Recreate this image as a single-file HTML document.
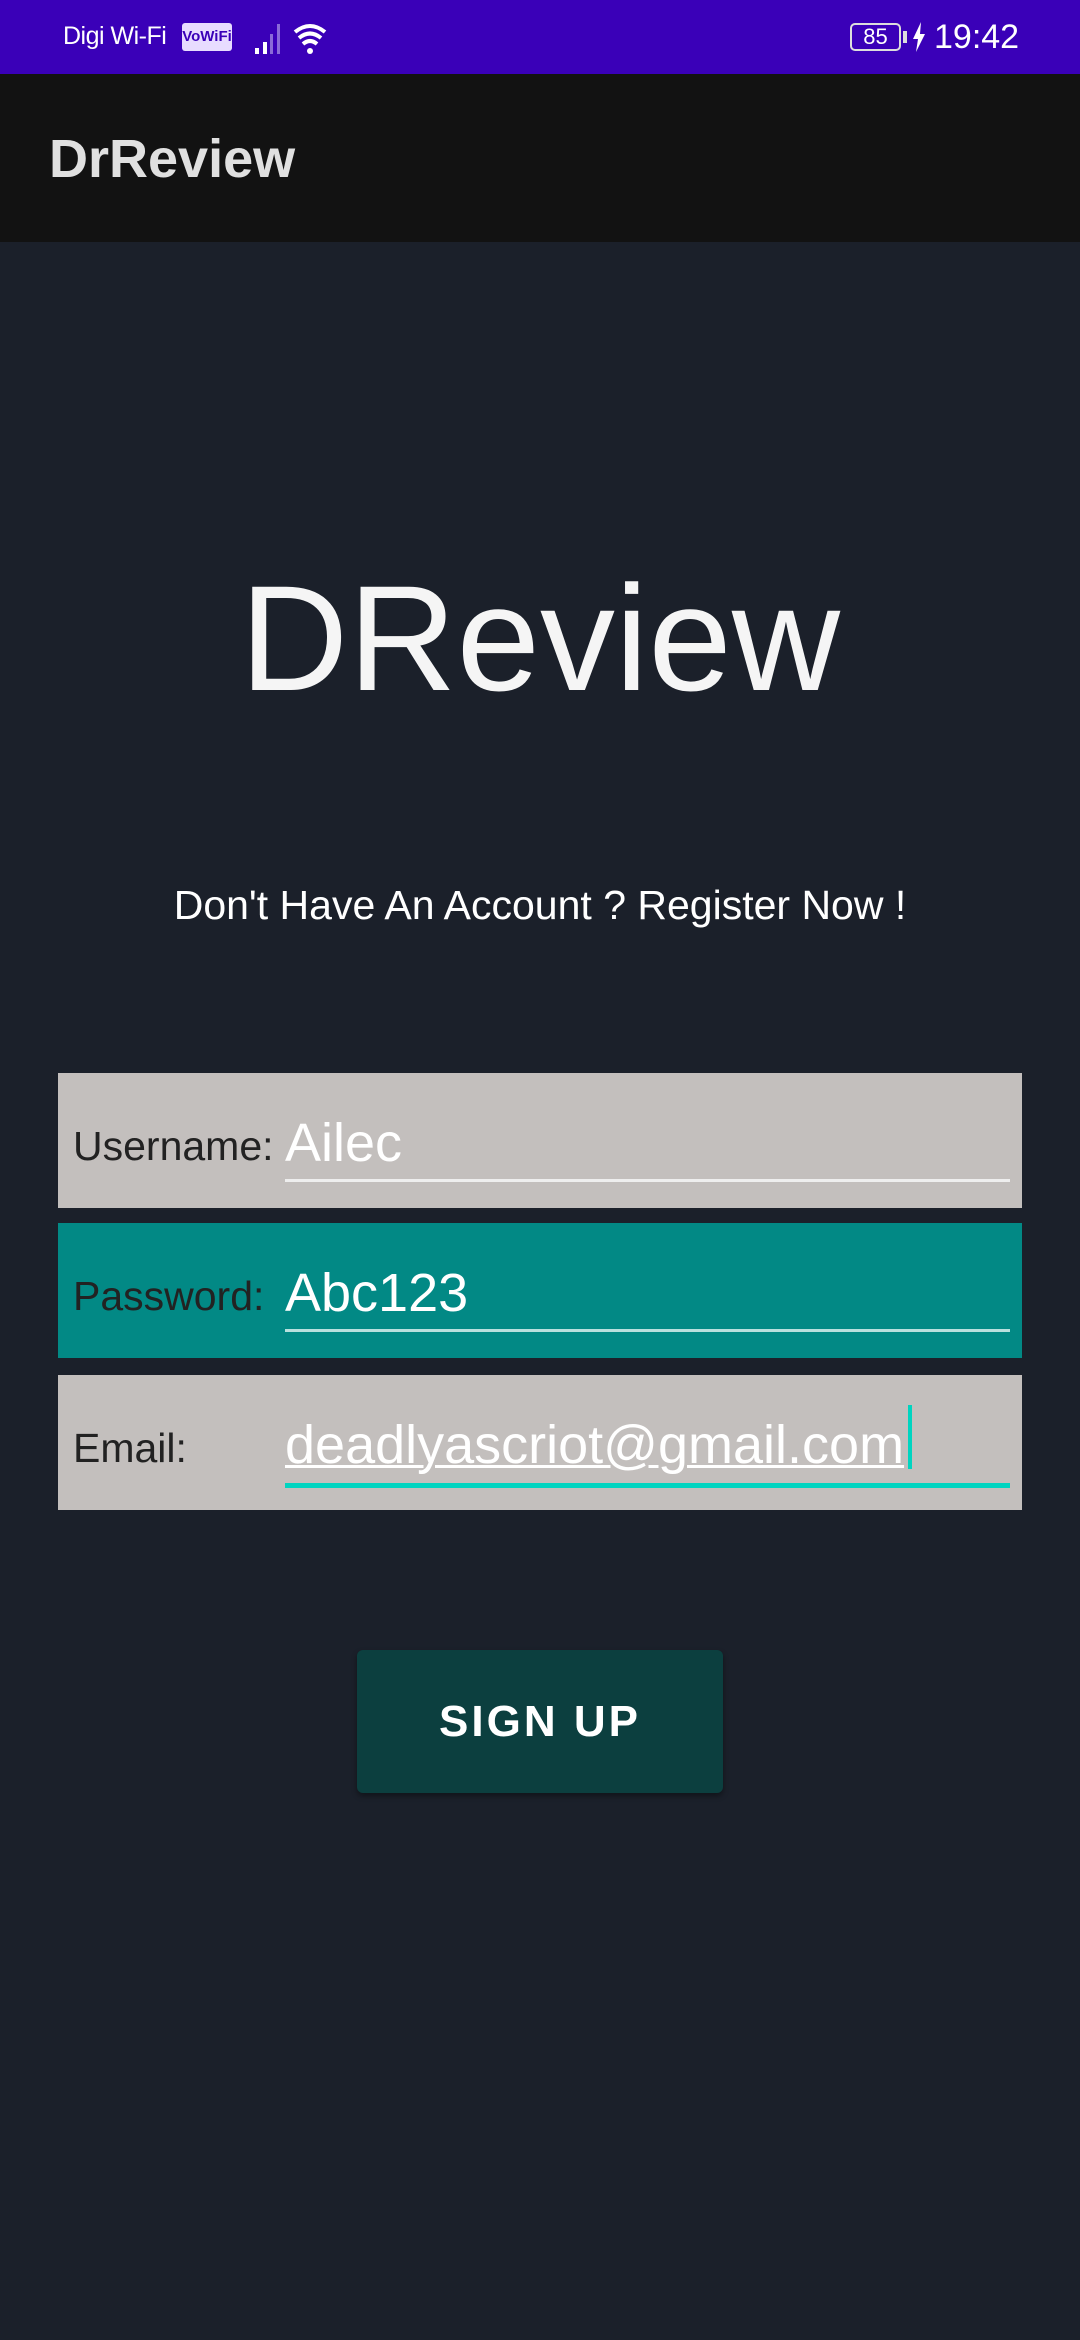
<!DOCTYPE html>
<html><head><meta charset="utf-8"><style>
*{margin:0;padding:0;box-sizing:border-box}
body{width:1080px;height:2340px;background:#1b202a;font-family:"Liberation Sans",sans-serif;position:relative;overflow:hidden}
.abs{position:absolute}
.sb{left:0;top:0;width:1080px;height:74px;background:#3a00b8;color:#fff}
.ab{left:0;top:74px;width:1080px;height:168px;background:#121212}
.box{left:58px;width:964px;height:135px;background:#c3bfbd}
.lab{left:15px;font-size:41px;color:#222}
.val{left:227px;font-size:54px;color:#fff;white-space:nowrap}
.ul{left:227px;width:725px;height:3px;background:#eee}
</style></head><body>
<div class="abs sb">
 <div class="abs" style="left:63px;top:22px;font-size:25px;letter-spacing:-0.5px">Digi Wi-Fi</div>
 <div class="abs" style="left:182px;top:23px;width:50px;height:28px;background:#e8dcff;border-radius:3px;color:#3a00b8;font-size:15px;font-weight:bold;text-align:center;line-height:28px;overflow:hidden">VoWiFi</div>
 <svg class="abs" style="left:255px;top:20px" width="90" height="36" viewBox="0 0 90 36">
  <rect x="0" y="28" width="4" height="6" fill="#fff"/><rect x="8" y="22" width="4" height="12" fill="#fff"/><rect x="15" y="14" width="3" height="20" fill="#8a6ad8"/><rect x="22" y="4" width="3" height="30" fill="#8a6ad8"/>
  <path d="M40 12 Q55 0 70 12 M44 18 Q55 9 66 18 M48 24 Q55 18 62 24" stroke="#fff" stroke-width="4" fill="none"/>
  <circle cx="55" cy="31" r="3" fill="#fff"/>
 </svg>
 <div class="abs" style="left:850px;top:23px;width:51px;height:28px;border:2px solid #ddd;border-radius:5px;font-size:22px;text-align:center;line-height:24px">85</div>
 <div class="abs" style="left:903px;top:31px;width:4px;height:12px;background:#ddd"></div>
 <svg class="abs" style="left:912px;top:22px" width="14" height="30" viewBox="0 0 14 30"><path d="M9 0 L1 17 H6 L4 30 L13 12 H8 Z" fill="#fff"/></svg>
 <div class="abs" style="left:934px;top:18px;font-size:34px">19:42</div>
</div>
<div class="abs ab"><div class="abs" style="left:49px;top:54px;font-size:54px;font-weight:bold;color:#e0e0e0">DrReview</div></div>
<div class="abs" style="left:0;width:1080px;top:552px;text-align:center;font-size:150px;color:#f5f5f5">DReview</div>
<div class="abs" style="left:0;width:1080px;top:882px;text-align:center;font-size:41px;color:#fff">Don't Have An Account ? Register Now !</div>

<div class="abs box" style="top:1073px">
 <div class="abs lab" style="top:50px">Username:</div>
 <div class="abs val" style="top:39px">Ailec</div>
 <div class="abs ul" style="top:106px"></div>
</div>
<div class="abs box" style="top:1223px;background:#028985">
 <div class="abs lab" style="top:50px">Password:</div>
 <div class="abs val" style="top:39px">Abc123</div>
 <div class="abs ul" style="top:106px;background:#b8e0de"></div>
</div>
<div class="abs box" style="top:1375px">
 <div class="abs lab" style="top:50px">Email:</div>
 <div class="abs val" style="top:39px;text-decoration:underline;text-decoration-thickness:3px">deadlyascriot@gmail.com</div>
 <div class="abs" style="left:850px;top:30px;width:4px;height:64px;background:#00d4c0"></div>
 <div class="abs ul" style="top:108px;height:5px;background:#00d4c0"></div>
</div>

<div class="abs" style="left:357px;top:1650px;width:366px;height:143px;background:#0c3f3f;border-radius:6px;box-shadow:0 3px 6px rgba(0,0,0,.4);color:#fff;font-size:44px;font-weight:bold;letter-spacing:3px;text-align:center;line-height:143px">SIGN UP</div>
</body></html>
